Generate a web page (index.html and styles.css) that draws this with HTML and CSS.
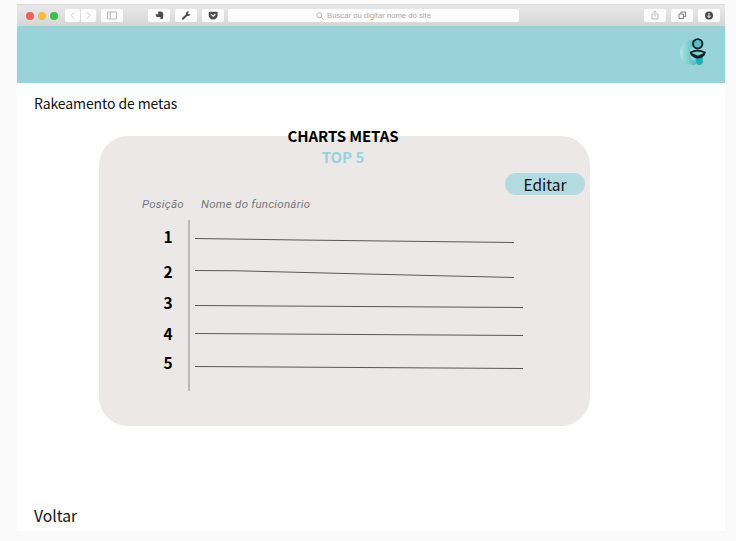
FILE: index.html
```html
<!DOCTYPE html>
<html lang="pt-BR">
<head>
<meta charset="utf-8">
<title>Rakeamento de metas</title>
<link rel="stylesheet" href="styles.css">
</head>
<body>
<div class="window">
  <div class="toolbar">
    <div class="lights"><i class="red"></i><i class="yellow"></i><i class="green"></i></div>
    <div class="nav">
      <span class="tool"><svg viewBox="0 0 14 13"><path d="M8.500 3.500 5.500 6.500l3 3" stroke="#c9c9c9"/></svg></span>
      <span class="tool"><svg viewBox="0 0 14 13"><path d="m5.500 3.500 3 3-3 3" stroke="#c9c9c9"/></svg></span>
    </div>
    <span class="tool sidebar"><svg viewBox="0 0 22 13"><path d="M6.500 3h9v7h-9zM9.500 3v7M7.500 5h1M7.500 7h1" stroke="#bbb"/></svg></span>
    <div class="extensions">
      <span class="tool"><svg viewBox="0 0 22 13"><path d="M10.200 2.700c2-.5 4.700 0 4.900 1.400.3 2 .1 4.500-.5 6h-2.100l-.3-1.600 1.200.2c-1.200-1-2.500-.3-4.400-.8-1-.3-1.400-1.400-1.300-2.600h2.500z" fill="#4d4d4d"/></svg></span>
      <span class="tool"><svg viewBox="0 0 22 13"><path d="m7.300 10.200 5-4.700" stroke="#4d4d4d" stroke-width="2"/><path d="M13.700 2.200c-2-.2-3.300 1.700-2.500 3.600.9 1.800 3.300 1.700 4.300-.5l-1.600.2-.8-1z" fill="#4d4d4d"/></svg></span>
      <span class="tool"><svg viewBox="0 0 22 13"><path d="M7.800 2.700h6.700q1.200 0 1.200 1.200v2.200a4.500 4.500 0 0 1-9 0V3.900q0-1.200 1.100-1.200z" fill="#4d4d4d"/><path d="m9 5.300 2.200 2 2.200-2" stroke="#fff" stroke-width="1.200"/></svg></span>
    </div>
    <div class="address">
      <svg viewBox="0 0 8 8"><circle cx="3.300" cy="3.300" r="2.500" stroke="#aaa" stroke-width=".8"/><path d="m5.200 5.200 2.200 2.200" stroke="#aaa" stroke-width=".8"/></svg>
      <span>Buscar ou digitar nome do site</span>
    </div>
    <div class="actions">
      <span class="tool"><svg viewBox="0 0 22 13"><path d="M9.500 5H8v5h6V5h-1.500M11 7.500V2M9.300 3.500 11 1.900l1.700 1.600" stroke="#aaa" stroke-width=".8"/></svg></span>
      <span class="tool"><svg viewBox="0 0 22 13"><path d="M8 5h4.500v4.500H8zM10 5V3h4.500v4.500h-2" stroke="#777" stroke-width=".9"/></svg></span>
      <span class="tool"><svg viewBox="0 0 22 13"><circle cx="11" cy="6.500" r="4" fill="#484848"/><path d="M11 4v4.300M9.200 6.700 11 8.500l1.800-1.800" stroke="#fff"/></svg></span>
    </div>
  </div>
  <header class="banner">
    <svg class="logo" viewBox="0 0 30 30">
      <defs>
        <linearGradient id="ring" x1="0" x2="1"><stop offset="0" stop-color="#b7e4e4"/><stop offset="1" stop-color="#45b8bc"/></linearGradient>
      </defs>
      <path d="M15 3C7 2 1 8 1 15.500c0 8 6 13 15 12.500l2-4c-6 0-7-4-7-8s1-6 4-7z" fill="url(#ring)"/>
      <path d="M16 20h8v4q0 4-3.500 4T17 24z" fill="#20afb3"/>
      <circle cx="18.700" cy="6.800" r="4.700" fill="#55bfc3" stroke="#102124" stroke-width="1.900"/>
      <path d="M11.500 15.500c4-2.200 10-2.200 14.500 0-.8 2.700-3.500 4.900-7.200 5.200-3.500-.3-6.300-2.500-7.300-5.200z" fill="#80cdd1" stroke="#102124" stroke-width="1.500"/>
      <path d="m12 17 4.800 2 2 1 2-1 4.800-2" stroke="#102124" stroke-width="2"/>
    </svg>
  </header>
  <main>
    <h1>Rakeamento de metas</h1>
    <section class="card">
      <h2>CHARTS METAS</h2>
      <h3>TOP 5</h3>
      <button class="edit">Editar</button>
      <div class="labels"><span class="place">Posição</span><span>Nome do funcionário</span></div>
      <div class="ranking">
        <div class="positions"><b>1</b><b>2</b><b>3</b><b>4</b><b>5</b></div>
        <svg class="names" viewBox="0 0 330 171">
          <path d="M0 18.500 104 20 319 22.500"/>
          <path d="M0 50.500 42 50.800 150 53.500 319 57.500"/>
          <path d="M0 85.500 328 87.500"/>
          <path d="M0 113.500 328 115.500"/>
          <path d="M0 146.500 328 148.500"/>
        </svg>
      </div>
    </section>
    <a class="back">Voltar</a>
  </main>
</div>
</body>
</html>
```
FILE: styles.css
```css
* { box-sizing: border-box; }
body {
  margin: 0;
  height: 541px;
  padding: 4px 11px 10px 17px;
  overflow: hidden;
  background: #fafafa;
  color: #111;
  font-family: "Noto Sans CJK SC", "Open Sans", sans-serif;
}
svg { display: block; fill: none; }
.window { height: 527px; background: #fff; }
.toolbar {
  display: flex;
  align-items: center;
  height: 22px;
  padding: 0 5px 0 9px;
  border-top: 1px solid #dadada;
  background: linear-gradient(#e9e9e9, #d6d6d6);
}
.lights { display: flex; gap: 4px; margin-right: 7px; }
.lights i { width: 8px; height: 8px; border-radius: 50%; }
.red { background: #ed6158; }
.yellow { background: #f2bd45; }
.green { background: #3bbd4e; }
.tool {
  display: block;
  width: 22px;
  height: 13px;
  border-radius: 2px;
  background: #fcfcfc;
}
.tool svg { width: 100%; height: 13px; }
.nav { display: flex; gap: 1px; margin-right: 5px; }
.nav .tool { width: 15px; }
.sidebar { margin-right: 25px; }
.extensions { display: flex; gap: 5px; margin-right: 4px; }
.address {
  display: flex;
  align-items: center;
  justify-content: center;
  gap: 3px;
  width: 291px;
  height: 13px;
  border-radius: 2px;
  background: #fcfcfc;
  color: #aaa;
  font: 7.7px/13px "Liberation Sans", sans-serif;
  white-space: nowrap;
}
.address svg { width: 8px; height: 8px; }
.actions { display: flex; gap: 5px; margin-left: auto; }
.banner {
  display: flex;
  justify-content: flex-end;
  height: 57px;
  padding: 11px 16px 0 0;
  background: #98d3da;
}
.logo { width: 30px; height: 30px; }
main { padding: 10px 18px 0 17px; }
h1 { margin: 0; font-size: 14px; line-height: 20px; font-weight: 400; letter-spacing: -.1px; }
.card {
  display: flow-root;
  width: 491px;
  height: 290px;
  margin: 23px 0 0 65px;
  border-radius: 29px;
  background: #ebe8e7;
}
h2, h3 { margin: 0; padding-right: 3px; text-align: center; font-size: 15px; line-height: 20px; font-weight: 700; }
h2 { margin-top: -10px; color: #000; letter-spacing: -.1px; }
h3 { margin-top: 1px; color: #98d3da; }
.edit {
  display: block;
  width: 80px;
  height: 22px;
  margin: 6px 5px 0 auto;
  padding: 0;
  border: 0;
  border-radius: 11px;
  background: #b3dade;
  color: #111;
  font: 15.5px/21px "Noto Sans CJK SC", sans-serif;
}
.labels {
  display: flex;
  padding-left: 43px;
  color: #777;
  font: italic 11.5px/18px Roboto, sans-serif;
  letter-spacing: .25px;
}
.place { width: 59px; }
.ranking { display: flex; margin: 7px 0 0 61px; }
.positions {
  display: grid;
  grid-template-rows: 32px 38px 24px 38px 20px;
  align-items: center;
  justify-items: center;
  align-content: start;
  width: 30px;
  height: 171px;
  padding-right: 12px;
  border-right: 2px solid #bcb9b8;
  color: #000;
  font-size: 15.5px;
  line-height: 20px;
}
.names { width: 330px; height: 171px; margin-left: 5px; stroke: #484646; stroke-width: .9; }
.back { display: block; margin-top: 78px; font-size: 15.7px; line-height: 24px; }
```
